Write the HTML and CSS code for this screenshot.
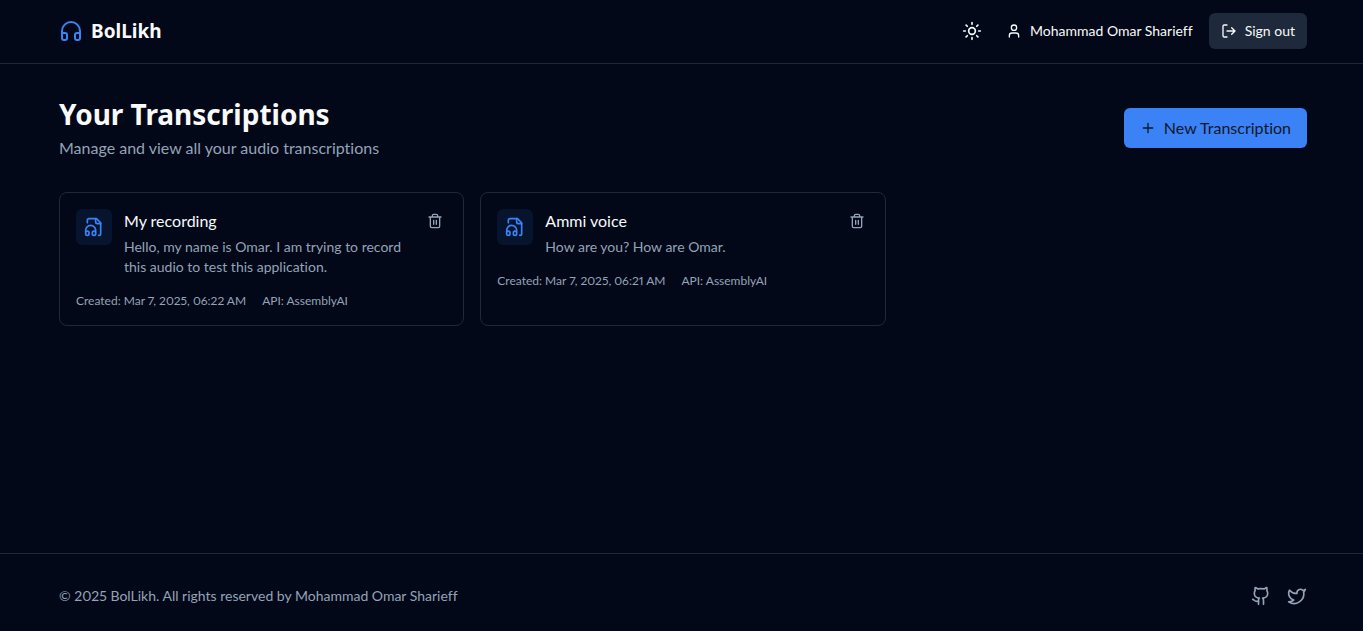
FILE: index.html
```html
<!DOCTYPE html>
<html lang="en">
<head>
<meta charset="utf-8">
<meta name="viewport" content="width=device-width, initial-scale=1">
<title>BolLikh</title>
<link rel="stylesheet" href="styles.css">
</head>
<body>
<header class="topbar">
  <div class="container topbar-row">
    <a class="brand" href="#">
      <svg class="icon icon-lg" viewBox="0 0 24 24"><path d="M3 14h3a2 2 0 0 1 2 2v3a2 2 0 0 1-2 2H5a2 2 0 0 1-2-2v-7a9 9 0 0 1 18 0v7a2 2 0 0 1-2 2h-1a2 2 0 0 1-2-2v-3a2 2 0 0 1 2-2h3"/></svg>
      <span>BolLikh</span>
    </a>
    <nav class="actions">
      <button class="theme" type="button" aria-label="Toggle theme">
        <svg class="icon icon-md" viewBox="0 0 24 24"><circle cx="12" cy="12" r="4"/><path d="M12 2v2M12 20v2M4.93 4.93l1.41 1.41M17.66 17.66l1.41 1.41M2 12h2M20 12h2M6.34 17.66l-1.41 1.41M19.07 4.93l-1.41 1.41"/></svg>
      </button>
      <div class="user">
        <svg class="icon icon-sm" viewBox="0 0 24 24"><path d="M19 21v-2a4 4 0 0 0-4-4H9a4 4 0 0 0-4 4v2"/><circle cx="12" cy="7" r="4"/></svg>
        <span>Mohammad Omar Sharieff</span>
      </div>
      <button class="signout" type="button">
        <svg class="icon icon-sm" viewBox="0 0 24 24"><path d="M9 21H5a2 2 0 0 1-2-2V5a2 2 0 0 1 2-2h4M16 17l5-5-5-5M21 12H9"/></svg>
        <span>Sign out</span>
      </button>
    </nav>
  </div>
</header>

<main class="container main">
  <div class="page-head">
    <div>
      <h1 class="title">Your Transcriptions</h1>
      <p class="subtitle">Manage and view all your audio transcriptions</p>
    </div>
    <button class="primary" type="button">
      <svg class="icon icon-sm" viewBox="0 0 24 24"><path d="M5 12h14M12 5v14"/></svg>
      <span>New Transcription</span>
    </button>
  </div>

  <div class="grid">
    <article class="card">
      <div class="card-top">
        <div class="badge">
          <svg class="icon icon-md" viewBox="0 0 24 24"><path d="M17.5 22h.5a2 2 0 0 0 2-2V7l-5-5H6a2 2 0 0 0-2 2v3"/><path d="M14 2v4a2 2 0 0 0 2 2h4"/><path d="M2 19a2 2 0 1 1 4 0v1a2 2 0 1 1-4 0v-4a6 6 0 0 1 12 0v4a2 2 0 1 1-4 0v-1a2 2 0 1 1 4 0"/></svg>
        </div>
        <div class="card-text">
          <h2 class="card-title">My recording</h2>
          <p class="excerpt">Hello, my name is Omar. I am trying to record this audio to test this application.</p>
        </div>
        <button class="delete" type="button" aria-label="Delete My recording">
          <svg class="icon icon-sm" viewBox="0 0 24 24"><path d="M3 6h18M19 6v14a2 2 0 0 1-2 2H7a2 2 0 0 1-2-2V6M8 6V4a2 2 0 0 1 2-2h4a2 2 0 0 1 2 2v2M10 11v6M14 11v6"/></svg>
        </button>
      </div>
      <div class="meta"><span>Created: Mar 7, 2025, 06:22 AM</span><span>API: AssemblyAI</span></div>
    </article>

    <article class="card">
      <div class="card-top">
        <div class="badge">
          <svg class="icon icon-md" viewBox="0 0 24 24"><path d="M17.5 22h.5a2 2 0 0 0 2-2V7l-5-5H6a2 2 0 0 0-2 2v3"/><path d="M14 2v4a2 2 0 0 0 2 2h4"/><path d="M2 19a2 2 0 1 1 4 0v1a2 2 0 1 1-4 0v-4a6 6 0 0 1 12 0v4a2 2 0 1 1-4 0v-1a2 2 0 1 1 4 0"/></svg>
        </div>
        <div class="card-text">
          <h2 class="card-title">Ammi voice</h2>
          <p class="excerpt">How are you? How are Omar.</p>
        </div>
        <button class="delete" type="button" aria-label="Delete Ammi voice">
          <svg class="icon icon-sm" viewBox="0 0 24 24"><path d="M3 6h18M19 6v14a2 2 0 0 1-2 2H7a2 2 0 0 1-2-2V6M8 6V4a2 2 0 0 1 2-2h4a2 2 0 0 1 2 2v2M10 11v6M14 11v6"/></svg>
        </button>
      </div>
      <div class="meta"><span>Created: Mar 7, 2025, 06:21 AM</span><span>API: AssemblyAI</span></div>
    </article>
  </div>
</main>

<footer class="footer">
  <div class="container footer-row">
    <p class="copyright">© 2025 BolLikh. All rights reserved by Mohammad Omar Sharieff</p>
    <div class="social">
      <a href="#" aria-label="GitHub"><svg class="icon icon-md" viewBox="0 0 24 24"><path d="M15 22v-4a4.8 4.8 0 0 0-1-3.5c3 0 6-2 6-5.5.08-1.25-.27-2.48-1-3.5.28-1.15.28-2.35 0-3.5 0 0-1 0-3 1.5-2.64-.5-5.36-.5-8 0C6 2 5 2 5 2c-.3 1.15-.3 2.35 0 3.5A5.403 5.403 0 0 0 4 9c0 3.5 3 5.5 6 5.5-.39.49-.68 1.05-.85 1.65-.17.6-.22 1.23-.15 1.85v4"/><path d="M9 18c-4.51 2-5-2-7-2"/></svg></a>
      <a href="#" aria-label="Twitter"><svg class="icon icon-md" viewBox="0 0 24 24"><path d="M22 4s-.7 2.1-2 3.4c1.6 10-9.4 17.3-18 11.6 2.2.1 4.4-.6 6-2C3 15.5.5 9.6 3 5c2.2 2.6 5.6 4.1 9 4-.9-4.2 4-6.6 7-3.8 1.1 0 3-1.2 3-1.2z"/></svg></a>
    </div>
  </div>
</footer>
</body>
</html>
```
FILE: styles.css
```css
* { box-sizing: border-box; margin: 0; padding: 0; }

body {
  min-height: 100vh;
  display: flex;
  flex-direction: column;
  background: #020817;
  color: #f8fafc;
  font-family: Lato, "Noto Sans", sans-serif;
  font-size: 16px;
  line-height: 24px;
  font-variant-ligatures: none;
  font-variant-numeric: proportional-nums;
}

button {
  border: 0;
  background: none;
  color: inherit;
  font: inherit;
  font-variant-ligatures: none;
  cursor: pointer;
}

a { color: inherit; text-decoration: none; }

.icon {
  display: block;
  flex: none;
  fill: none;
  stroke: currentColor;
  stroke-width: 2;
  stroke-linecap: round;
  stroke-linejoin: round;
}
.icon-sm { width: 16px; height: 16px; }
.icon-md { width: 20px; height: 20px; }
.icon-lg { width: 24px; height: 24px; }

.container { width: 100%; padding: 0 56px 0 59px; }

.topbar { border-bottom: 1px solid #1e293b; }
.topbar-row {
  display: flex;
  align-items: center;
  justify-content: space-between;
  padding-top: 13px;
  padding-bottom: 14px;
}
.brand {
  display: flex;
  align-items: center;
  gap: 8px;
  font-family: "Noto Sans", sans-serif;
  font-size: 19px;
  line-height: 28px;
  font-weight: 700;
}
.brand .icon { color: #3b82f6; }
.actions {
  display: flex;
  align-items: center;
  gap: 16px;
  font-size: 14px;
  line-height: 20px;
}
.theme { padding: 8px; }
.user { display: flex; align-items: center; gap: 8px; }
.signout {
  display: flex;
  align-items: center;
  gap: 8px;
  padding: 8px 12px;
  border-radius: 6px;
  background: #1e293b;
}

.main { flex: 1; padding-top: 32px; padding-bottom: 32px; }
.page-head {
  display: flex;
  align-items: center;
  justify-content: space-between;
  margin-bottom: 32px;
}
.title {
  font-family: "Noto Sans", sans-serif;
  font-size: 28px;
  line-height: 36px;
  font-weight: 700;
}
.subtitle { margin-top: 4px; color: #94a3b8; }
.primary {
  display: flex;
  align-items: center;
  gap: 8px;
  padding: 8px 16px;
  border-radius: 6px;
  background: #3b82f6;
  color: #0f172a;
}

.grid {
  display: grid;
  grid-template-columns: repeat(3, 1fr);
  gap: 16px;
}
.card { padding: 16px; border: 1px solid #1e293b; border-radius: 8px; }
.card-top { display: flex; align-items: flex-start; gap: 12px; }
.badge {
  padding: 8px;
  border-radius: 6px;
  background: rgba(59, 130, 246, 0.1);
  color: #3b82f6;
}
.card-text { flex: 1; min-width: 0; }
.card-title { font-size: 16px; line-height: 24px; font-weight: 400; }
.excerpt { margin-top: 4px; font-size: 14px; line-height: 20px; color: #94a3b8; }
.delete { padding: 4px; color: #94a3b8; }
.meta {
  display: flex;
  gap: 16px;
  margin-top: 16px;
  font-size: 12px;
  line-height: 16px;
  color: #94a3b8;
}

.footer { border-top: 1px solid #1e293b; padding: 32px 0 25px; }
.footer-row { display: flex; align-items: center; justify-content: space-between; }
.copyright { font-size: 14px; line-height: 20px; color: #94a3b8; }
.social { display: flex; gap: 16px; color: #94a3b8; }
```
